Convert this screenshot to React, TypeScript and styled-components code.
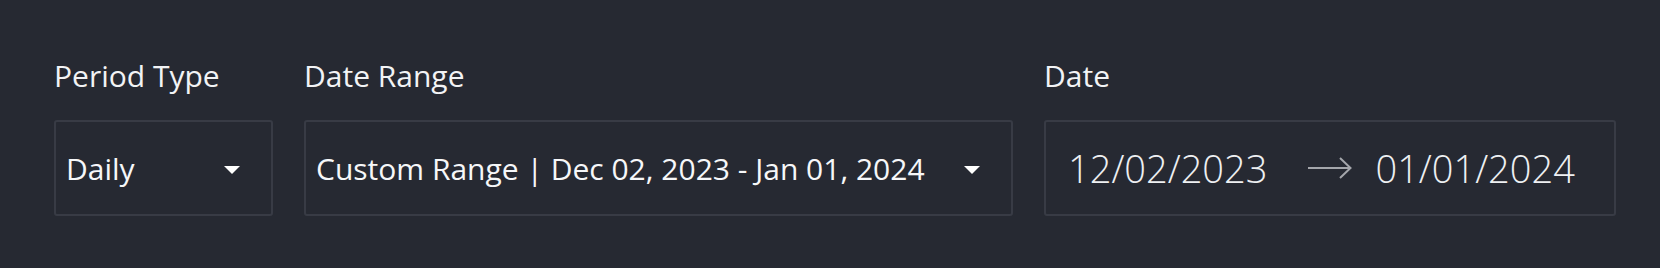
import React from 'react';
import styled, { createGlobalStyle } from 'styled-components';

const GlobalStyle = createGlobalStyle`
  html, body {
    margin: 0;
    padding: 0;
    background-color: #262932;
  }

  body {
    font-family: 'Open Sans', 'Noto Sans', sans-serif;
    color: #f2f3f5;
  }
`;

const Page = styled.div`
  box-sizing: border-box;
  width: 1660px;
  height: 268px;
  padding: 55px 43px 0 54px;
  background-color: #262932;
`;

const FilterRow = styled.div`
  display: flex;
  align-items: flex-start;
  gap: 31px;
`;

const Field = styled.div<{ $width: number }>`
  display: flex;
  flex-direction: column;
  gap: 24px;
  width: ${(props) => props.$width}px;
`;

const Label = styled.label`
  font-size: 30px;
  line-height: 41px;
  font-weight: 400;
  color: #f2f3f5;
`;

const Box = styled.div`
  box-sizing: border-box;
  display: flex;
  align-items: center;
  height: 96px;
  border: 2px solid #383b45;
  border-radius: 3px;
`;

const Select = styled(Box)`
  justify-content: space-between;
  padding: 0 31px 0 10px;
`;

const SelectValue = styled.span`
  font-size: 30px;
  font-weight: 400;
  color: #f6f7f9;
  white-space: nowrap;
`;

const Caret = styled.span`
  width: 0;
  height: 0;
  border-left: 8px solid transparent;
  border-right: 8px solid transparent;
  border-top: 8px solid #ffffff;
  margin-top: 3px;
`;

const RangeInput = styled(Box)`
  padding: 0 0 0 22px;
`;

const DateValue = styled.span`
  font-size: 38px;
  font-weight: 300;
  color: #eef0f2;
  white-space: nowrap;
`;

const ArrowWrap = styled.span`
  display: flex;
  align-items: center;
  margin: 0 23px 0 40px;
  color: #a4a6ab;
`;

const RangeArrow = () => (
  <svg width="45" height="22" viewBox="0 0 45 22" fill="none">
    <path d="M1 11H43" stroke="currentColor" strokeWidth="2" />
    <path d="M33 1L43.5 11L33 21" stroke="currentColor" strokeWidth="2" />
  </svg>
);

const App = () => {
  return (
    <Page>
      <GlobalStyle />
      <FilterRow>
        <Field $width={219}>
          <Label>Period Type</Label>
          <Select>
            <SelectValue>Daily</SelectValue>
            <Caret />
          </Select>
        </Field>
        <Field $width={709}>
          <Label>Date Range</Label>
          <Select>
            <SelectValue>Custom Range | Dec 02, 2023 - Jan 01, 2024</SelectValue>
            <Caret />
          </Select>
        </Field>
        <Field $width={572}>
          <Label>Date</Label>
          <RangeInput>
            <DateValue>12/02/2023</DateValue>
            <ArrowWrap>
              <RangeArrow />
            </ArrowWrap>
            <DateValue>01/01/2024</DateValue>
          </RangeInput>
        </Field>
      </FilterRow>
    </Page>
  );
};

export default App;
